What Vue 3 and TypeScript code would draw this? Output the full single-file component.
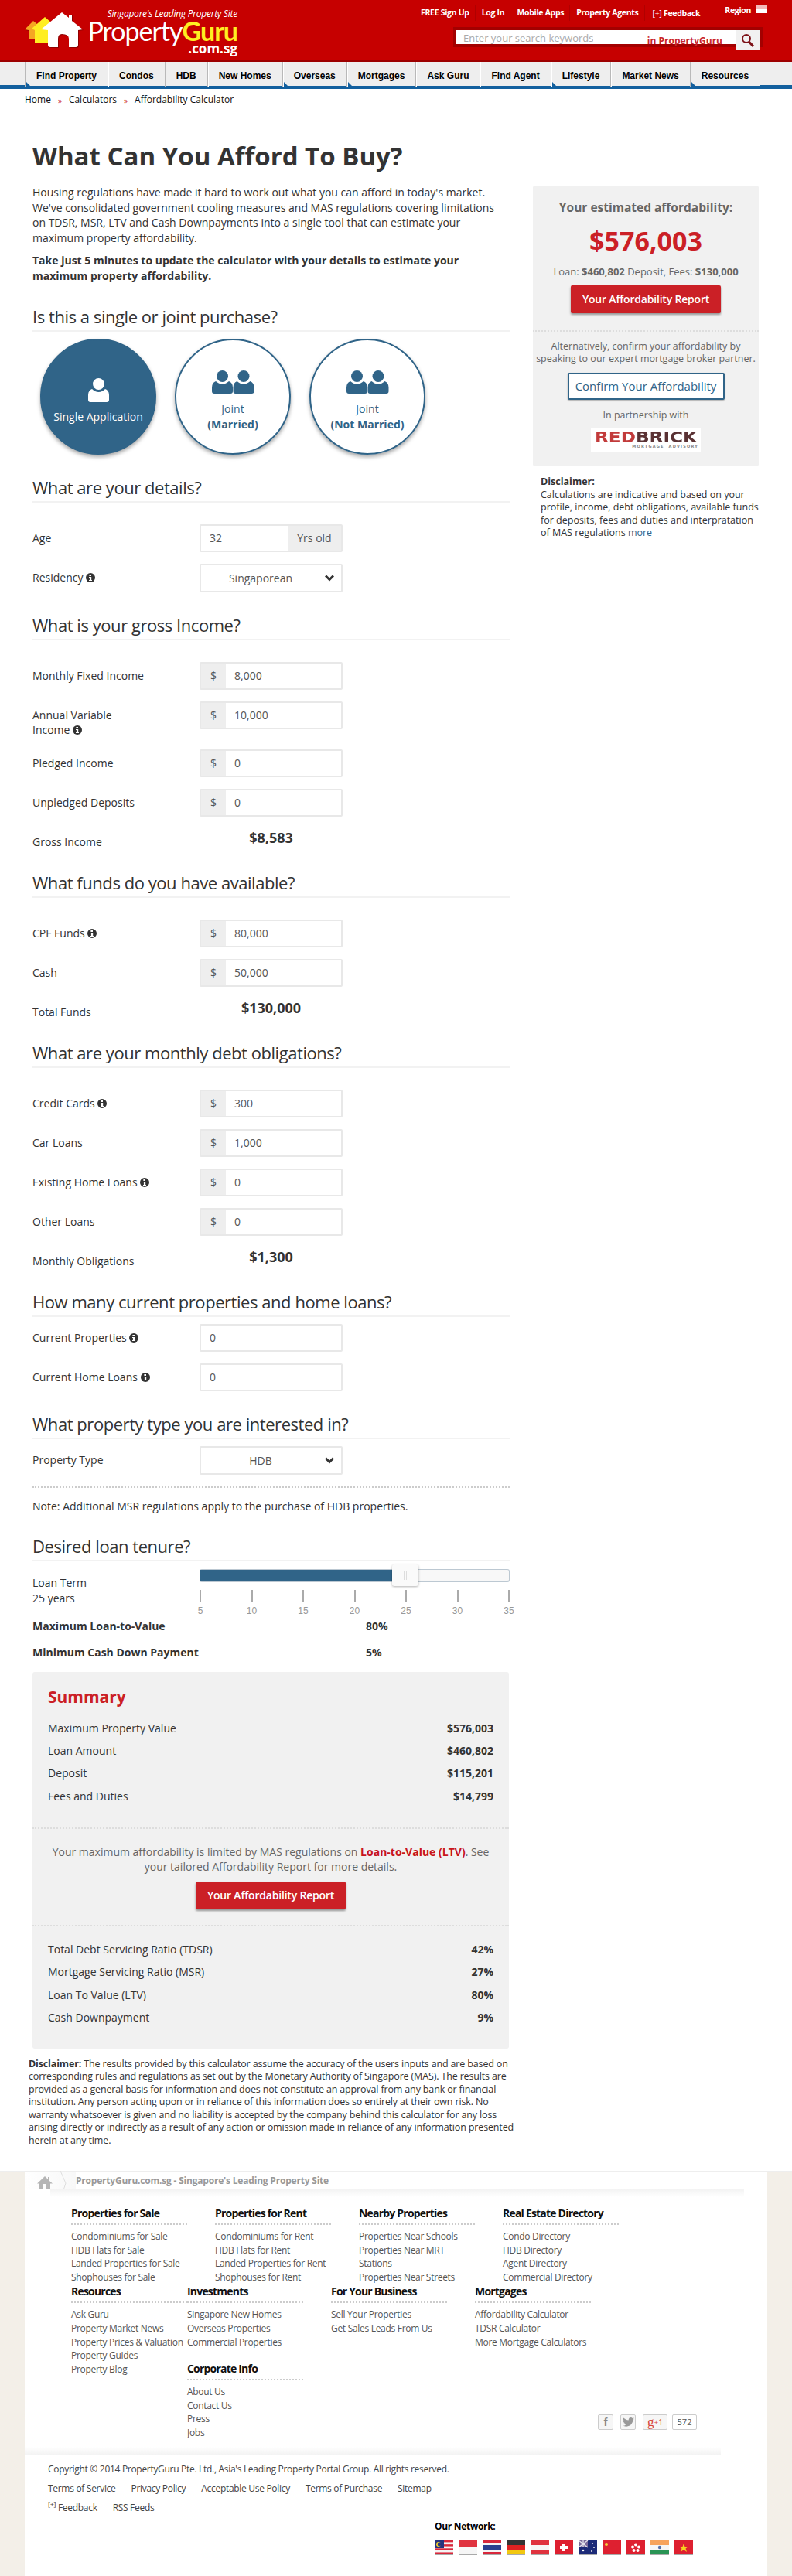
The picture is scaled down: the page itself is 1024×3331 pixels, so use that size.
<script setup lang="ts">
interface Row {
  label: string
  info?: boolean
  prefix?: boolean
  suffix?: string
  value: string
  select?: boolean
}
interface Group {
  title: string
  tight?: boolean
  rows: Row[]
  total?: { label: string; value: string }
}

const topLinks = ['FREE Sign Up', 'Log In', 'Mobile Apps', 'Property Agents']
const tabs = [
  { text: 'Find Property', mark: true },
  { text: 'Condos' },
  { text: 'HDB' },
  { text: 'New Homes' },
  { text: 'Overseas', mark: true },
  { text: 'Mortgages', mark: true },
  { text: 'Ask Guru' },
  { text: 'Find Agent' },
  { text: 'Lifestyle', mark: true },
  { text: 'Market News' },
  { text: 'Resources', mark: true },
]

const groups: Group[] = [
  {
    title: 'What are your details?',
    rows: [
      { label: 'Age', value: '32', suffix: 'Yrs old' },
      { label: 'Residency', info: true, value: 'Singaporean', select: true },
    ],
  },
  {
    title: 'What is your gross Income?',
    rows: [
      { label: 'Monthly Fixed Income', prefix: true, value: '8,000' },
      { label: 'Annual Variable\nIncome', info: true, prefix: true, value: '10,000' },
      { label: 'Pledged Income', prefix: true, value: '0' },
      { label: 'Unpledged Deposits', prefix: true, value: '0' },
    ],
    total: { label: 'Gross Income', value: '$8,583' },
  },
  {
    title: 'What funds do you have available?',
    rows: [
      { label: 'CPF Funds', info: true, prefix: true, value: '80,000' },
      { label: 'Cash', prefix: true, value: '50,000' },
    ],
    total: { label: 'Total Funds', value: '$130,000' },
  },
  {
    title: 'What are your monthly debt obligations?',
    rows: [
      { label: 'Credit Cards', info: true, prefix: true, value: '300' },
      { label: 'Car Loans', prefix: true, value: '1,000' },
      { label: 'Existing Home Loans', info: true, prefix: true, value: '0' },
      { label: 'Other Loans', prefix: true, value: '0' },
    ],
    total: { label: 'Monthly Obligations', value: '$1,300' },
  },
  {
    title: 'How many current properties and home loans?',
    tight: true,
    rows: [
      { label: 'Current Properties', info: true, value: '0' },
      { label: 'Current Home Loans', info: true, value: '0' },
    ],
  },
  {
    title: 'What property type you are interested in?',
    tight: true,
    rows: [{ label: 'Property Type', value: 'HDB', select: true }],
  },
]

const ticks = [5, 10, 15, 20, 25, 30, 35]
const summaryRows = [
  ['Maximum Property Value', '$576,003'],
  ['Loan Amount', '$460,802'],
  ['Deposit', '$115,201'],
  ['Fees and Duties', '$14,799'],
]
const ratioRows = [
  ['Total Debt Servicing Ratio (TDSR)', '42%'],
  ['Mortgage Servicing Ratio (MSR)', '27%'],
  ['Loan To Value (LTV)', '80%'],
  ['Cash Downpayment', '9%'],
]

const footerTop = [
  { title: 'Properties for Sale', links: ['Condominiums for Sale', 'HDB Flats for Sale', 'Landed Properties for Sale', 'Shophouses for Sale'] },
  { title: 'Properties for Rent', links: ['Condominiums for Rent', 'HDB Flats for Rent', 'Landed Properties for Rent', 'Shophouses for Rent'] },
  { title: 'Nearby Properties', links: ['Properties Near Schools', 'Properties Near MRT Stations', 'Properties Near Streets'] },
  { title: 'Real Estate Directory', links: ['Condo Directory', 'HDB Directory', 'Agent Directory', 'Commercial Directory'] },
]
const resources = ['Ask Guru', 'Property Market News', 'Property Prices & Valuation', 'Property Guides', 'Property Blog']
const investments = ['Singapore New Homes', 'Overseas Properties', 'Commercial Properties']
const corporate = ['About Us', 'Contact Us', 'Press', 'Jobs']
const business = ['Sell Your Properties', 'Get Sales Leads From Us']
const mortgages = ['Affordability Calculator', 'TDSR Calculator', 'More Mortgage Calculators']
const legal = ['Terms of Service', 'Privacy Policy', 'Acceptable Use Policy', 'Terms of Purchase', 'Sitemap']

const flags = [
  { name: 'my', bands: ['#d8283c', '#f4f4f4', '#d8283c', '#f4f4f4', '#d8283c', '#f4f4f4', '#d8283c'] },
  { name: 'sg', bands: ['#e0333f', '#f6f6f6'] },
  { name: 'th', bands: ['#d8283c', '#f4f4f4', '#2a3f8f', '#2a3f8f', '#f4f4f4', '#d8283c'] },
  { name: 'de', bands: ['#333333', '#dd2222', '#f2c811'] },
  { name: 'at', bands: ['#e0333f', '#f6f6f6', '#e0333f'] },
  { name: 'ch', bands: ['#de2030'] },
  { name: 'au', bands: ['#1c2a78'] },
  { name: 'cn', bands: ['#de2030'] },
  { name: 'hk', bands: ['#de2030'] },
  { name: 'in', bands: ['#f7a35c', '#f6f6f6', '#2a9455'] },
  { name: 'vn', bands: ['#de2030'] },
]
</script>

<template>
  <div class="page">
    <header class="masthead">
      <div class="logo">
        <svg class="logo-mark" width="76" height="46" viewBox="0 0 76 46">
          <path d="M0 22 L11 11 L22 20 L18 34 H5 V23 Z" fill="#f5a623" />
          <path d="M9 21 L26 6 L40 18 L36 39 H13 V23 Z" fill="#ffee22" />
          <path d="M21 22 L48 0 L57 7 V3 H61 V11 L75 22 L69 23 V42 Q69 45 66 45 H57 V34 Q57 28 48 28 Q43 28 43 34 V45 H33 Q30 45 30 42 V23 Z" fill="#fff" />
        </svg>
        <div class="logo-text">
          <div class="tagline">Singapore's Leading Property Site</div>
          <div class="wordmark">Property<span>Guru</span></div>
          <div class="domain">.com.sg</div>
        </div>
      </div>
      <div class="tools">
        <div class="tool-links">
          <a v-for="l in topLinks" :key="l" class="tool-link">{{ l }}</a>
          <a class="tool-feedback"><span>[+]</span> Feedback</a>
          <a class="region">Region</a>
          <svg class="region-flag" width="14" height="10" viewBox="0 0 14 10">
            <rect width="14" height="5" fill="#f3b9b9" />
            <rect y="5" width="14" height="5" fill="#fff" />
          </svg>
        </div>
        <div class="search">
          <div class="search-input">
            <span class="placeholder">Enter your search keywords</span>
            <span class="search-scope">in PropertyGuru</span>
          </div>
          <div class="search-btn">
            <svg width="18" height="18" viewBox="0 0 18 18" fill="none" stroke="#7d1218">
              <circle cx="7" cy="7" r="5" stroke-width="2" />
              <path d="M10.5 11 L16 17" stroke-width="3" />
            </svg>
          </div>
        </div>
      </div>
    </header>

    <nav class="tabs">
      <a v-for="t in tabs" :key="t.text" class="tab">
        {{ t.text }}
        <i v-if="t.mark" class="tab-mark"></i>
      </a>
    </nav>

    <div class="crumbs">
      <span>Home</span><b>»</b><span>Calculators</span><b>»</b><span>Affordability Calculator</span>
    </div>

    <div class="layout">
      <main class="main">
        <h1>What Can You Afford To Buy?</h1>
        <p class="intro">Housing regulations have made it hard to work out what you can afford in today's market. We've consolidated government cooling measures and MAS regulations covering limitations on TDSR, MSR, LTV and Cash Downpayments into a single tool that can estimate your maximum property affordability.</p>
        <p class="intro strong">Take just 5 minutes to update the calculator with your details to estimate your maximum property affordability.</p>

        <h2 class="first">Is this a single or joint purchase?</h2>
        <div class="choices">
          <div class="choice active">
            <svg width="27" height="31" viewBox="0 0 27 31">
              <circle cx="13.5" cy="7.5" r="7.5" fill="#fff" />
              <path d="M5 14 Q9 18 13.5 18 Q18 18 22 14 Q27 16 27 22 V28 Q27 31 24 31 H3 Q0 31 0 28 V22 Q0 16 5 14 Z" fill="#fff" />
            </svg>
            <span class="choice-text">Single Application</span>
          </div>
          <div v-for="c in ['(Married)', '(Not Married)']" :key="c" class="choice">
            <svg width="55" height="30" viewBox="0 0 55 30">
              <g v-for="x in [0, 27.5]" :key="x" :transform="`translate(${x} 0)`" fill="#306488">
                <circle cx="13.5" cy="7.5" r="7.5" />
                <path d="M5 14 Q9 17.5 13.5 17.5 Q18 17.5 22 14 Q27 16 27 22 V27 Q27 30 24 30 H3 Q0 30 0 27 V22 Q0 16 5 14 Z" />
              </g>
            </svg>
            <span class="choice-text">Joint<br /><b>{{ c }}</b></span>
          </div>
        </div>

        <section v-for="g in groups" :key="g.title" class="group" :class="{ tight: g.tight }">
          <h2>{{ g.title }}</h2>
          <div class="rows">
            <div v-for="r in g.rows" :key="r.label" class="row">
              <div class="row-label">{{ r.label }}
                <svg v-if="r.info" class="info" width="12" height="12" viewBox="0 0 12 12">
                  <circle cx="6" cy="6" r="6" fill="#333" />
                  <rect x="4.4" y="2" width="2.6" height="2" fill="#fff" />
                  <path d="M4 5 H7.2 V9 H8 V10 H4 V9 H4.9 V6 H4 Z" fill="#fff" />
                </svg>
              </div>
              <div v-if="r.select" class="field select">
                <span>{{ r.value }}</span>
                <svg width="12" height="9" viewBox="0 0 12 9" fill="none" stroke="#333" stroke-width="3">
                  <path d="M1 1.5 L6 6.5 L11 1.5" />
                </svg>
              </div>
              <div v-else class="field">
                <span v-if="r.prefix" class="addon prefix">$</span>
                <span class="field-value">{{ r.value }}</span>
                <span v-if="r.suffix" class="addon suffix">{{ r.suffix }}</span>
              </div>
            </div>
          </div>
          <div v-if="g.total" class="total">
            <div class="total-label">{{ g.total.label }}</div>
            <div class="total-value">{{ g.total.value }}</div>
          </div>
        </section>

        <p class="note">Note: Additional MSR regulations apply to the purchase of HDB properties.</p>

        <section class="group tenure">
          <h2>Desired loan tenure?</h2>
          <div class="tenure-row">
            <div class="tenure-label">Loan Term<br />25 years</div>
            <div class="slider">
              <div class="track">
                <div class="track-fill"></div>
                <div class="handle"><i></i></div>
              </div>
              <div class="ticks">
                <div v-for="t in ticks" :key="t" class="tick"><i></i><span>{{ t }}</span></div>
              </div>
            </div>
          </div>
          <div class="limit"><span>Maximum Loan-to-Value</span><span>80%</span></div>
          <div class="limit"><span>Minimum Cash Down Payment</span><span>5%</span></div>
        </section>

        <section class="summary">
          <h3>Summary</h3>
          <div class="summary-rows">
            <div v-for="r in summaryRows" :key="r[0]" class="summary-row"><span>{{ r[0] }}</span><b>{{ r[1] }}</b></div>
          </div>
          <div class="summary-cta">
            <p>Your maximum affordability is limited by MAS regulations on <b>Loan-to-Value (LTV)</b>. See your tailored Affordability Report for more details.</p>
            <a class="btn-red">Your Affordability Report</a>
          </div>
          <div class="summary-rows ratios">
            <div v-for="r in ratioRows" :key="r[0]" class="summary-row"><span>{{ r[0] }}</span><b>{{ r[1] }}</b></div>
          </div>
        </section>

        <p class="disclaimer"><b>Disclaimer:</b> The results provided by this calculator assume the accuracy of the users inputs and are based on corresponding rules and regulations as set out by the Monetary Authority of Singapore (MAS). The results are provided as a general basis for information and does not constitute an approval from any bank or financial institution. Any person acting upon or in reliance of this information does so entirely at their own risk. No warranty whatsoever is given and no liability is accepted by the company behind this calculator for any loss arising directly or indirectly as a result of any action or omission made in reliance of any information presented herein at any time.</p>
      </main>

      <aside class="side">
        <div class="panel">
          <div class="estimate">
            <div class="estimate-title">Your estimated affordability:</div>
            <div class="estimate-value">$576,003</div>
            <div class="estimate-line">Loan: <b>$460,802</b> Deposit, Fees: <b>$130,000</b></div>
            <a class="btn-red">Your Affordability Report</a>
          </div>
          <div class="partner">
            <p>Alternatively, confirm your affordability by speaking to our expert mortgage broker partner.</p>
            <a class="btn-outline">Confirm Your Affordability</a>
            <p class="partner-with">In partnership with</p>
            <div class="redbrick">
              <div class="redbrick-name"><span>RED</span>BRICK</div>
              <div class="redbrick-sub">MORTGAGE&nbsp;&nbsp;ADVISORY</div>
            </div>
          </div>
        </div>
        <div class="side-note">
          <b>Disclaimer:</b><br />
          Calculations are indicative and based on your profile, income, debt obligations, available funds for deposits, fees and duties and interpratation of MAS regulations <a>more</a>
        </div>
      </aside>
    </div>

    <footer class="footer">
      <div class="footer-inner">
        <div class="footer-bar">
          <div class="footer-home">
            <svg width="20" height="16" viewBox="0 0 20 16">
              <path d="M10 0 L14 4 V1 H16 V6 L20 9.5 H17 V16 H12 V10 H8 V16 H3 V9.5 H0 Z" fill="#b5b5b5" />
            </svg>
            <svg class="footer-chevron" width="10" height="28" viewBox="0 0 10 28" fill="none" stroke="#ddd">
              <path d="M1 0 L8 16 L4 28" />
            </svg>
          </div>
          <span class="footer-site">PropertyGuru.com.sg - Singapore's Leading Property Site</span>
        </div>

        <div class="directory">
          <div class="dir-row">
            <div v-for="c in footerTop" :key="c.title" class="dir-col">
              <h4>{{ c.title }}</h4>
              <a v-for="l in c.links" :key="l">{{ l }}</a>
            </div>
          </div>
          <div class="dir-row">
            <div class="dir-col narrow">
              <h4>Resources</h4>
              <a v-for="l in resources" :key="l">{{ l }}</a>
            </div>
            <div class="dir-col">
              <h4>Investments</h4>
              <a v-for="l in investments" :key="l">{{ l }}</a>
              <h4 class="dir-sub">Corporate Info</h4>
              <a v-for="l in corporate" :key="l">{{ l }}</a>
            </div>
            <div class="dir-col">
              <h4>For Your Business</h4>
              <a v-for="l in business" :key="l">{{ l }}</a>
            </div>
            <div class="dir-col narrow">
              <h4>Mortgages</h4>
              <a v-for="l in mortgages" :key="l">{{ l }}</a>
            </div>
            <div class="social">
              <span class="social-btn fb">f</span>
              <span class="social-btn tw">
                <svg width="15" height="12" viewBox="0 0 15 12">
                  <path d="M15 1.5 Q14 2 13.4 2 Q14.4 1.2 14.6 0.2 Q13.6 0.8 12.8 1 Q11.8 0 10.6 0 Q8 0 7.6 3.4 Q4 3.2 1 .6 Q0 3 2.2 5 Q1.4 5 .8 4.6 Q.8 6.8 3 7.6 Q2.2 7.8 1.6 7.6 Q2.2 9.2 4.2 9.4 Q2.4 10.8 0 10.6 Q3 12 6 11.6 Q13 10 13.4 3 Q14.4 2.4 15 1.5 Z" fill="#999" />
                </svg>
              </span>
              <span class="social-btn gplus"><b>g</b>+1</span>
              <span class="social-btn count">572</span>
            </div>
          </div>
        </div>

        <div class="legal">
          <div class="copyright">Copyright © 2014 PropertyGuru Pte. Ltd., Asia's Leading Property Portal Group. All rights reserved.</div>
          <div class="legal-links">
            <a v-for="l in legal" :key="l">{{ l }}</a>
          </div>
          <div class="legal-links">
            <a><sup>[+]</sup> Feedback</a>
            <a>RSS Feeds</a>
          </div>
        </div>

        <div class="network">
          <div class="network-title">Our Network:</div>
          <div class="flags">
            <svg v-for="f in flags" :key="f.name" width="24" height="18" viewBox="0 0 24 18" class="flag">
              <rect
                v-for="(b, i) in f.bands"
                :key="i"
                x="0"
                :y="(18 / f.bands.length) * i"
                width="24"
                :height="18 / f.bands.length + 0.1"
                :fill="b"
              />
              <template v-if="f.name === 'my'">
                <rect width="12" height="10" fill="#26337e" />
                <circle cx="5" cy="5" r="3" fill="#f5d327" />
                <circle cx="6" cy="5" r="2.4" fill="#26337e" />
              </template>
              <template v-if="f.name === 'ch'">
                <rect x="10" y="4" width="4" height="10" fill="#fff" />
                <rect x="7" y="7" width="10" height="4" fill="#fff" />
              </template>
              <template v-if="f.name === 'au'">
                <rect width="12" height="9" fill="#7a6a9a" />
                <path d="M0 0 L12 9 M12 0 L0 9 M6 0 V9 M0 4.5 H12" stroke="#e8e8f0" stroke-width="1.2" />
                <circle cx="6" cy="13" r="1.3" fill="#fff" />
                <circle cx="18" cy="4" r=".9" fill="#fff" />
                <circle cx="20" cy="9" r=".9" fill="#fff" />
                <circle cx="17" cy="14" r=".9" fill="#fff" />
              </template>
              <circle v-if="f.name === 'cn'" cx="5" cy="5" r="2" fill="#f3d23b" />
              <g v-if="f.name === 'hk'" fill="#fff">
                <circle cx="12" cy="5.5" r="2" />
                <circle cx="8" cy="8.5" r="2" />
                <circle cx="16" cy="8.5" r="2" />
                <circle cx="9.5" cy="13" r="2" />
                <circle cx="14.5" cy="13" r="2" />
              </g>
              <circle v-if="f.name === 'in'" cx="12" cy="9" r="2.2" fill="#5570a8" />
              <path v-if="f.name === 'vn'" d="M12 4 L13.5 8 H18 L14.5 10.5 L16 15 L12 12 L8 15 L9.5 10.5 L6 8 H10.5 Z" fill="#f6d21f" />
            </svg>
          </div>
        </div>
      </div>
    </footer>
  </div>
</template>

<style scoped>
.page {
  width: 1024px;
  height: 3331px;
  overflow: hidden;
  background: #fff;
  color: #333;
  font-family: "Open Sans", sans-serif;
  font-size: 14px;
}

/* masthead */
.masthead {
  display: flex;
  height: 78px;
  background: #c60000;
  border-bottom: 2px solid #9d0000;
  color: #fff;
}
.logo {
  display: flex;
  flex: none;
  width: 275px;
  margin-left: 32px;
}
.logo-mark {
  flex: none;
  margin-top: 16px;
  filter: drop-shadow(1px 1px 0 #8f0000);
}
.logo-text {
  display: flex;
  flex-direction: column;
  align-items: flex-end;
  width: 194px;
  margin-left: 5px;
}
.tagline {
  margin-top: 10px;
  font-size: 12px;
  line-height: 16px;
  font-style: italic;
  white-space: nowrap;
  letter-spacing: -0.25px;
}
.wordmark {
  height: 32px;
  margin-top: -2px;
  font-family: "Lato", sans-serif;
  font-size: 34px;
  line-height: 32px;
  letter-spacing: -1px;
  white-space: nowrap;
}
.wordmark span {
  color: #ffee22;
  font-weight: 700;
}
.domain {
  margin-top: -2px;
  font-size: 17px;
  line-height: 18px;
  font-weight: 700;
}
.tools {
  flex: none;
  width: 450px;
  margin-left: 229px;
}
.tool-links {
  display: flex;
  align-items: center;
  height: 21px;
  margin-top: 6px;
  font-size: 10.5px;
  font-weight: 700;
  letter-spacing: -0.3px;
  white-space: nowrap;
}
.tool-link {
  padding: 4px 7px 4px 8px;
  border-right: 1px solid #b00000;
  line-height: 13px;
}
.tool-feedback {
  margin-left: 10px;
}
.tool-feedback span {
  font-weight: 400;
}
.region {
  margin: -8px 0 0 32px;
}
.region-flag {
  flex: none;
  margin: -10px 0 0 7px;
}
.search {
  display: flex;
  width: 400px;
  height: 26px;
  margin: 8px 0 0 50px;
  padding: 4px;
  box-sizing: border-box;
  background: #a30000;
}
.search-input {
  display: flex;
  justify-content: space-between;
  width: 362px;
  height: 18px;
  padding: 0 18px 0 9px;
  box-sizing: border-box;
  background: #fff;
  white-space: nowrap;
}
.placeholder {
  height: 18px;
  overflow: hidden;
  color: #aaa;
  font-size: 13px;
  font-weight: 400;
  line-height: 20px;
}
.search-scope {
  margin-top: 6px;
  color: #c9252b;
  font-size: 12px;
  font-weight: 700;
  line-height: 16px;
}
.search-btn {
  display: flex;
  align-items: center;
  justify-content: center;
  flex: none;
  width: 30px;
  height: 26px;
  background: #f1f1f1;
}

/* main tabs */
.tabs {
  display: flex;
  height: 30px;
  padding-left: 32px;
  background: #eee;
  border-bottom: 5px solid #13609e;
}
.tab {
  position: relative;
  height: 33px;
  padding: 0 14px;
  background: #eee;
  border-left: 1px solid #b9b9b9;
  box-shadow: inset 1px 0 0 #fff, inset 0 -3px 0 -1px #13609e;
  color: #000;
  font-family: "Liberation Sans", Arial, sans-serif;
  font-size: 12px;
  font-weight: 700;
  line-height: 36px;
  white-space: nowrap;
}
.tab:last-child {
  border-right: 1px solid #b9b9b9;
}
.tab-mark {
  position: absolute;
  left: 1px;
  top: 26px;
  border-left: 5px solid #13609e;
  border-top: 5px solid transparent;
}

.crumbs {
  display: flex;
  align-items: center;
  height: 20px;
  padding: 4px 0 0 32px;
  color: #111;
  font-size: 12px;
  line-height: 20px;
}
.crumbs b {
  margin: 2px 9px 0;
  color: #c8141c;
  font-size: 10px;
  font-weight: 400;
}

/* body columns */
.layout {
  display: flex;
  height: 2668px;
  box-sizing: border-box;
  padding: 41px 0 0 42px;
}
.main {
  flex: none;
  width: 617px;
}
h1 {
  margin: 0;
  font-size: 33px;
  line-height: 44px;
  font-weight: 700;
}
.intro {
  margin: 15px 0 0;
  line-height: 19.6px;
}
.intro.strong {
  margin-top: 10px;
  font-weight: 700;
}
h2 {
  margin: 0;
  padding-bottom: 3px;
  border-bottom: 2px solid #f2f2f2;
  font-size: 22px;
  font-weight: 400;
  line-height: 30px;
  letter-spacing: -0.45px;
}
h2.first {
  margin-top: 27px;
}

.choices {
  display: flex;
  gap: 24px;
  margin: 9px 0 0 10px;
}
.choice {
  display: flex;
  flex-direction: column;
  align-items: center;
  justify-content: center;
  gap: 10px;
  width: 150px;
  height: 150px;
  box-sizing: border-box;
  padding-top: 12px;
  border: 2px solid #306488;
  border-radius: 50%;
  box-shadow: 0 3px 5px rgba(0, 0, 0, 0.35);
  color: #306488;
}
.choice.active {
  background: #306488;
  color: #fff;
  gap: 9px;
}
.choice-text {
  text-align: center;
  line-height: 20px;
}

.group {
  margin-top: 27px;
}
.rows {
  margin-top: 28px;
}
.group.tight .rows {
  margin-top: 9px;
}
.row {
  display: flex;
  margin-bottom: 15px;
}
.row-label {
  width: 216px;
  padding-top: 8px;
  font-size: 14px;
  line-height: 19.6px;
  white-space: pre-line;
}
.info {
  vertical-align: -1px;
}
.field {
  display: flex;
  align-items: center;
  flex: none;
  width: 185px;
  height: 36px;
  box-sizing: border-box;
  background: #fff;
  border: 2px solid #e8e8e8;
  border-radius: 2px;
  color: #555;
}
.field-value {
  flex: 1;
  padding-left: 11px;
}
.addon {
  display: flex;
  align-items: center;
  justify-content: center;
  height: 100%;
  background: #eee;
}
.addon.prefix {
  width: 32px;
}
.addon.suffix {
  width: 69px;
}
.field.select {
  justify-content: space-between;
  height: 37px;
  padding-right: 9px;
}
.field.select span {
  flex: 1;
  padding-right: 6px;
  text-align: center;
}
.total {
  display: flex;
  height: 28px;
}
.total-label {
  width: 216px;
  padding-top: 8px;
  line-height: 20px;
}
.total-value {
  width: 185px;
  font-size: 18px;
  font-weight: 700;
  line-height: 24px;
  text-align: center;
}
.note {
  margin: 1px 0 0;
  padding-top: 14px;
  border-top: 2px dotted #ccc;
  line-height: 20px;
}

/* tenure slider */
.tenure {
  margin-top: 26px;
}
.tenure-row {
  display: flex;
}
.tenure-label {
  width: 216px;
  padding-top: 18px;
  line-height: 20px;
}
.slider {
  width: 401px;
  margin: 10px 0 3px;
}
.track {
  position: relative;
  height: 17px;
  box-sizing: border-box;
  background: #f8f8f8;
  border: 1px solid #bcc8d2;
  border-bottom-width: 2px;
  border-radius: 3px;
}
.track-fill {
  width: 248px;
  height: 100%;
  background: #306488;
}
.handle {
  position: absolute;
  left: 248px;
  top: -7px;
  display: flex;
  justify-content: center;
  align-items: center;
  width: 34px;
  height: 28px;
  background: #fafafa;
  border-radius: 3px;
  box-shadow: 0 1px 3px rgba(0, 0, 0, 0.3);
}
.handle i {
  width: 2px;
  height: 12px;
  border-left: 1px solid #ddd;
  border-right: 1px solid #ddd;
}
.ticks {
  display: flex;
  justify-content: space-between;
  height: 34px;
  margin-top: 10px;
}
.tick {
  display: flex;
  flex-direction: column;
  align-items: center;
  width: 2px;
  color: #999;
  font-family: "Liberation Sans", Arial, sans-serif;
  font-size: 12px;
  line-height: 14px;
}
.tick i {
  flex: none;
  width: 2px;
  height: 15px;
  margin-bottom: 5px;
  background: #aaa;
}
.limit {
  display: flex;
  margin-bottom: 14px;
  font-weight: 700;
  line-height: 20px;
}
.limit span:first-child {
  width: 431px;
}

/* summary */
.summary {
  width: 616px;
  margin-top: 15px;
  box-sizing: border-box;
  background: #f1f1f1;
  border-radius: 3px;
  height: 487px;
  padding-top: 17px;
}
h3 {
  margin: 0 20px;
  color: #cb2026;
  font-size: 21px;
  font-weight: 700;
  line-height: 30px;
}
.summary-rows {
  margin: 11px 20px 0;
}
.summary-row {
  display: flex;
  justify-content: space-between;
  line-height: 29.3px;
}
.summary-cta {
  margin-top: 26px;
  padding: 20px 20px 20px;
  border-top: 2px dotted #ddd;
  border-bottom: 2px dotted #ddd;
  color: #666;
  text-align: center;
}
.summary-cta p {
  margin: 0 0 9px;
  line-height: 19.5px;
}
.summary-cta b {
  color: #c8141c;
}
.ratios {
  margin-top: 15px;
}
.btn-red {
  display: block;
  width: 194px;
  height: 36px;
  margin: 0 auto;
  background: #cb2026;
  border-radius: 2px;
  box-shadow: 0 2px 3px rgba(0, 0, 0, 0.4);
  color: #fff;
  font-size: 14px;
  font-weight: 600;
  letter-spacing: -0.2px;
  line-height: 36px;
  text-align: center;
}
.disclaimer {
  width: 630px;
  margin: 12px 0 0 -5px;
  font-size: 12.5px;
  letter-spacing: -0.15px;
  line-height: 16.5px;
}

/* right column */
.side {
  flex: none;
  width: 292px;
  margin: 60px 0 0 30px;
}
.panel {
  height: 363px;
  background: #f1f1f1;
  border-radius: 3px;
  text-align: center;
  color: #666;
}
.estimate {
  height: 189px;
  padding-top: 18px;
  box-sizing: border-box;
  border-bottom: 2px dotted #ddd;
}
.estimate-title {
  font-size: 15.5px;
  font-weight: 700;
  line-height: 20px;
}
.estimate-value {
  margin-top: 11px;
  color: #cb2026;
  font-size: 34px;
  font-weight: 700;
  line-height: 44px;
}
.estimate-line {
  margin: 9px 0 9px;
  font-size: 13px;
  line-height: 18px;
}
.partner {
  padding-top: 11px;
  font-size: 12.5px;
}
.partner p {
  margin: 0;
  line-height: 16px;
}
.btn-outline {
  display: block;
  width: 203px;
  height: 35px;
  margin: 10px auto 0;
  box-sizing: border-box;
  background: #fff;
  border: 2px solid #306488;
  border-radius: 2px;
  box-shadow: 0 1px 2px rgba(0, 0, 0, 0.3);
  color: #306488;
  font-size: 15px;
  line-height: 31px;
}
.partner .partner-with {
  margin-top: 12px;
}
.redbrick {
  width: 142px;
  height: 30px;
  margin: 9px auto 0;
  padding: 2px 3px 0;
  box-sizing: border-box;
  background: #fff;
  text-align: right;
}
.redbrick-name {
  color: #5a3234;
  font-family: "DejaVu Sans", sans-serif;
  font-size: 19px;
  font-weight: 700;
  line-height: 18px;
  text-align: center;
  white-space: nowrap;
  transform: scaleX(1.22);
}
.redbrick-name span {
  color: #c23b3b;
}
.redbrick-sub {
  color: #888;
  font-family: "DejaVu Sans", sans-serif;
  font-size: 5px;
  font-weight: 700;
  letter-spacing: 1.2px;
  line-height: 7px;
  white-space: nowrap;
}
.side-note {
  margin: 12px 0 0 10px;
  font-size: 12.5px;
  line-height: 16.5px;
}
.side-note a {
  color: #306488;
  text-decoration: underline;
}

/* footer */
.footer {
  height: 524px;
  box-sizing: border-box;
  padding-left: 32px;
  background: #f3efe8;
  border-top: 1px solid #eee;
}
.footer-inner {
  width: 960px;
  height: 100%;
  background: #fff;
}
.footer-bar {
  position: relative;
  display: flex;
  align-items: center;
  height: 22px;
  margin-bottom: 22px;
  color: #999;
  font-size: 12px;
  font-weight: 700;
}
.footer-bar::after {
  content: "";
  position: absolute;
  left: 33px;
  top: 22px;
  width: 897px;
  height: 10px;
  border-top: 1px solid #ccc;
  background: linear-gradient(#f3f3f3, #fff);
}
.footer-home {
  position: relative;
  display: flex;
  align-items: flex-end;
  width: 66px;
  height: 22px;
  padding-left: 16px;
  box-sizing: border-box;
  background: linear-gradient(90deg, #fff, #f8f8f8);
}
.footer-chevron {
  position: absolute;
  left: 45px;
  top: -1px;
}
.footer-site {
  letter-spacing: -0.2px;
}
.directory {
  padding-left: 60px;
  color: #555;
  font-size: 12px;
}
.dir-row {
  display: flex;
}
.dir-col {
  flex: none;
  width: 186px;
}
.dir-col.narrow {
  width: 150px;
}
h4 {
  width: 150px;
  margin: 0 0 6px;
  padding-bottom: 3px;
  border-bottom: 2px dotted #ccc;
  color: #111;
  font-size: 14px;
  font-weight: 700;
  line-height: 20px;
  letter-spacing: -0.8px;
  white-space: nowrap;
}
.dir-col a {
  display: block;
  width: 150px;
  line-height: 17.6px;
  letter-spacing: -0.3px;
}
.dir-col .dir-sub {
  margin-top: 16px;
}
.social {
  display: flex;
  align-items: stretch;
  align-self: flex-end;
  gap: 9px;
  height: 20px;
  margin: 0 0 13px 9px;
}
.social-btn {
  display: flex;
  align-items: center;
  justify-content: center;
  width: 20px;
  box-sizing: border-box;
  background: #f6f6f6;
  border: 1px solid #ccc;
  border-radius: 2px;
  color: #888;
}
.fb {
  font-family: "Liberation Sans", sans-serif;
  font-size: 15px;
  font-weight: 700;
}
.gplus {
  width: 32px;
  color: #d8473c;
  font-size: 10px;
}
.gplus b {
  font-family: "Liberation Serif", serif;
  font-size: 17px;
  font-weight: 400;
  line-height: 14px;
}
.count {
  width: 32px;
  margin-left: -3px;
  background: #fff;
  color: #555;
  font-size: 11px;
}
.legal {
  position: relative;
  width: 870px;
  margin-top: 19px;
  padding: 9px 0 0 30px;
  border-top: 1px solid #ddd;
  color: #444;
  font-size: 12px;
  line-height: 18px;
}
.legal::before {
  content: "";
  position: absolute;
  left: 0;
  top: -11px;
  width: 900px;
  height: 10px;
  background: linear-gradient(#fff, #f3f3f3);
}
.copyright {
  letter-spacing: -0.3px;
}
.legal-links {
  display: flex;
  gap: 20px;
  margin-top: 7px;
  letter-spacing: -0.3px;
}
.legal-links sup {
  font-size: 9px;
  line-height: 0;
}
.network {
  margin: 6px 0 0 530px;
}
.network-title {
  color: #000;
  font-size: 12px;
  font-weight: 700;
  line-height: 18px;
  letter-spacing: -0.3px;
}
.flags {
  display: flex;
  gap: 7px;
  margin-top: 9px;
}
.flag {
  flex: none;
  box-shadow: 0 1px 0 #aaa;
}
</style>

<style>
body {
  margin: 0;
}
</style>
